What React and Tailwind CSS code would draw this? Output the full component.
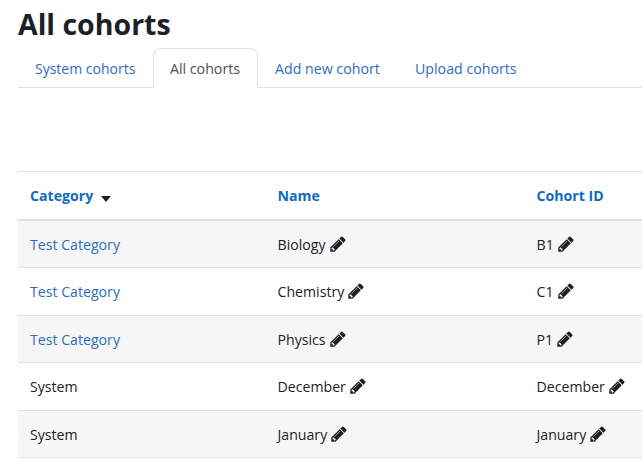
function Pencil() {
  return (
    <svg viewBox="0 0 1792 1792" className="w-[18px] h-[18px] inline-block fill-[#1d2125] ml-[3px] align-[-3px] shrink-0">
      <path d="M491 1536l91-91-235-235-91 91v107h128v128h107zm523-928q0-22-22-22-10 0-17 7l-542 542q-7 7-7 17 0 22 22 22 10 0 17-7l542-542q7-7 7-17zm-54-192l416 416-832 832h-416v-416zm683 96q0 53-37 90l-166 166-416-416 166-165q36-38 90-38 53 0 91 38l235 234q37 39 37 91z" />
    </svg>
  );
}
const rows = [
  ["Test Category", "Biology", "B1", true],
  ["Test Category", "Chemistry", "C1", true],
  ["Test Category", "Physics", "P1", true],
  ["System", "December", "December", false],
  ["System", "January", "January", false],
];
export default function App() {
  return (
    <div className="h-[474px] w-[642px] overflow-hidden bg-white pl-[18px] font-['Open_Sans','Liberation_Sans',sans-serif] text-[14.15px] text-[#1d2125]">
      <h1 className="pt-[5px] text-[28.5px] leading-[38px] font-bold">All cohorts</h1>
      <div className="mt-[5px] flex h-[40px] border-b border-[#dee2e6] text-[14.2px] text-[#2f6bbf]">
        <div className="w-[135px] pl-[17px] pt-[10px] text-[14px]">System cohorts</div>
        <div className="h-[40px] w-[105px] rounded-t-[8px] border border-b-0 border-[#dee2e6] bg-white pl-[16px] pt-[9px] text-[#495057]">All cohorts</div>
        <div className="w-[140px] pl-[17px] pt-[10px]">Add new cohort</div>
        <div className="pl-[17px] pt-[10px]">Upload cohorts</div>
      </div>
      <div className="mt-[83px] border-t border-[#dee2e6]">
        <div className="flex h-[49px] items-center border-b-2 border-[#dee2e6] font-bold text-[#0f6cbf]">
          <div className="w-[247.5px] pl-[12px]">
            Category
            <span className="ml-[8px] inline-block h-0 w-0 translate-y-[1px] border-x-[5.5px] border-t-[6px] border-x-transparent border-t-[#1d2125]" />
          </div>
          <div className="w-[259px] pl-[12px]">Name</div>
          <div className="pl-[12px]">Cohort ID</div>
        </div>
        {rows.map((r, i) => (
          <div key={i} className={`flex h-[47.45px] items-center border-b border-[#dee2e6] pt-[0.6px] ${i % 2 === 0 ? "bg-[#f6f6f7]" : "bg-white"}`}>
            <div className={`w-[247.5px] pl-[12px] ${r[3] ? "text-[#2a70bd]" : ""}`}>{r[0]}</div>
            <div className="w-[259px] pl-[12px]">{r[1]}<Pencil /></div>
            <div className="pl-[12px]">{r[2]}<Pencil /></div>
          </div>
        ))}
      </div>
    </div>
  );
}
